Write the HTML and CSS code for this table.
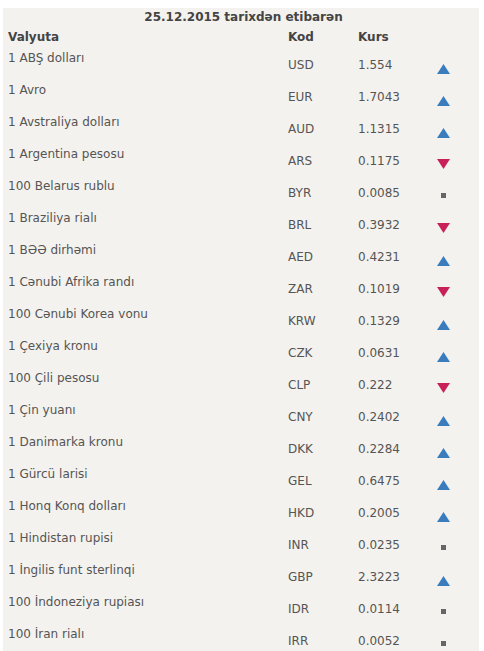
FILE: index.html
```html
<!DOCTYPE html>
<html>
<head>
<meta charset="utf-8">
<link rel="stylesheet" href="styles.css">
</head>
<body>
<div class="box">
  <div class="title">25.12.2015 tarixdən etibarən</div>
  <div class="grid">
    <div class="hd">Valyuta</div><div class="hd">Kod</div><div class="hd">Kurs</div><div class="hd"></div>

    <div class="name">1 ABŞ dolları</div><div class="code">USD</div><div class="rate">1.554</div><div class="ind"><svg class="up" viewBox="0 0 13 10"><polygon points="6.5,0 13,10 0,10"/></svg></div>
    <div class="name">1 Avro</div><div class="code">EUR</div><div class="rate">1.7043</div><div class="ind"><svg class="up" viewBox="0 0 13 10"><polygon points="6.5,0 13,10 0,10"/></svg></div>
    <div class="name">1 Avstraliya dolları</div><div class="code">AUD</div><div class="rate">1.1315</div><div class="ind"><svg class="up" viewBox="0 0 13 10"><polygon points="6.5,0 13,10 0,10"/></svg></div>
    <div class="name">1 Argentina pesosu</div><div class="code">ARS</div><div class="rate">0.1175</div><div class="ind"><svg class="down" viewBox="0 0 13 10"><polygon points="0,0 13,0 6.5,10"/></svg></div>
    <div class="name">100 Belarus rublu</div><div class="code">BYR</div><div class="rate">0.0085</div><div class="ind"><span class="sq"></span></div>
    <div class="name">1 Braziliya rialı</div><div class="code">BRL</div><div class="rate">0.3932</div><div class="ind"><svg class="down" viewBox="0 0 13 10"><polygon points="0,0 13,0 6.5,10"/></svg></div>
    <div class="name">1 BƏƏ dirhəmi</div><div class="code">AED</div><div class="rate">0.4231</div><div class="ind"><svg class="up" viewBox="0 0 13 10"><polygon points="6.5,0 13,10 0,10"/></svg></div>
    <div class="name">1 Cənubi Afrika randı</div><div class="code">ZAR</div><div class="rate">0.1019</div><div class="ind"><svg class="down" viewBox="0 0 13 10"><polygon points="0,0 13,0 6.5,10"/></svg></div>
    <div class="name">100 Cənubi Korea vonu</div><div class="code">KRW</div><div class="rate">0.1329</div><div class="ind"><svg class="up" viewBox="0 0 13 10"><polygon points="6.5,0 13,10 0,10"/></svg></div>
    <div class="name">1 Çexiya kronu</div><div class="code">CZK</div><div class="rate">0.0631</div><div class="ind"><svg class="up" viewBox="0 0 13 10"><polygon points="6.5,0 13,10 0,10"/></svg></div>
    <div class="name">100 Çili pesosu</div><div class="code">CLP</div><div class="rate">0.222</div><div class="ind"><svg class="down" viewBox="0 0 13 10"><polygon points="0,0 13,0 6.5,10"/></svg></div>
    <div class="name">1 Çin yuanı</div><div class="code">CNY</div><div class="rate">0.2402</div><div class="ind"><svg class="up" viewBox="0 0 13 10"><polygon points="6.5,0 13,10 0,10"/></svg></div>
    <div class="name">1 Danimarka kronu</div><div class="code">DKK</div><div class="rate">0.2284</div><div class="ind"><svg class="up" viewBox="0 0 13 10"><polygon points="6.5,0 13,10 0,10"/></svg></div>
    <div class="name">1 Gürcü larisi</div><div class="code">GEL</div><div class="rate">0.6475</div><div class="ind"><svg class="up" viewBox="0 0 13 10"><polygon points="6.5,0 13,10 0,10"/></svg></div>
    <div class="name">1 Honq Konq dolları</div><div class="code">HKD</div><div class="rate">0.2005</div><div class="ind"><svg class="up" viewBox="0 0 13 10"><polygon points="6.5,0 13,10 0,10"/></svg></div>
    <div class="name">1 Hindistan rupisi</div><div class="code">INR</div><div class="rate">0.0235</div><div class="ind"><span class="sq"></span></div>
    <div class="name">1 İngilis funt sterlinqi</div><div class="code">GBP</div><div class="rate">2.3223</div><div class="ind"><svg class="up" viewBox="0 0 13 10"><polygon points="6.5,0 13,10 0,10"/></svg></div>
    <div class="name">100 İndoneziya rupiası</div><div class="code">IDR</div><div class="rate">0.0114</div><div class="ind"><span class="sq"></span></div>
    <div class="name">100 İran rialı</div><div class="code">IRR</div><div class="rate">0.0052</div><div class="ind"><span class="sq"></span></div>
  </div>
</div>
</body>
</html>
```
FILE: styles.css
```css
html, body {
  margin: 0;
  padding: 0;
  background: #ffffff;
}
body {
  font-family: "DejaVu Sans", Verdana, sans-serif;
  font-size: 12px;
  color: #555;
}
.box {
  margin: 8px 5px 0 3px;
  background: #f4f2ee;
  padding: 0 0 20px 5px;
}
.title {
  height: 18px;
  line-height: 18px;
  text-align: center;
  font-weight: bold;
  font-size: 12px;
  color: #444;
}
.grid {
  display: grid;
  grid-template-columns: 280px 70px 70px 1fr;
  grid-auto-rows: 32px;
  grid-template-rows: 22px;
}
.hd {
  font-weight: bold;
  font-size: 12px;
  color: #444;
  line-height: 22px;
}
.name {
  line-height: 16px;
  padding-top: 2px;
}
.code, .rate {
  line-height: 16px;
  padding-top: 9px;
}
.ind {
  padding-left: 9px;
}
.up, .down {
  display: block;
  width: 13px;
  height: 10px;
  margin-top: 16px;
}
.up { fill: #3a7dbf; }
.down { fill: #c8215a; margin-top: 15px; }
.sq {
  display: block;
  width: 5px;
  height: 5px;
  background: #666;
  margin: 17px 0 0 4px;
}
```
